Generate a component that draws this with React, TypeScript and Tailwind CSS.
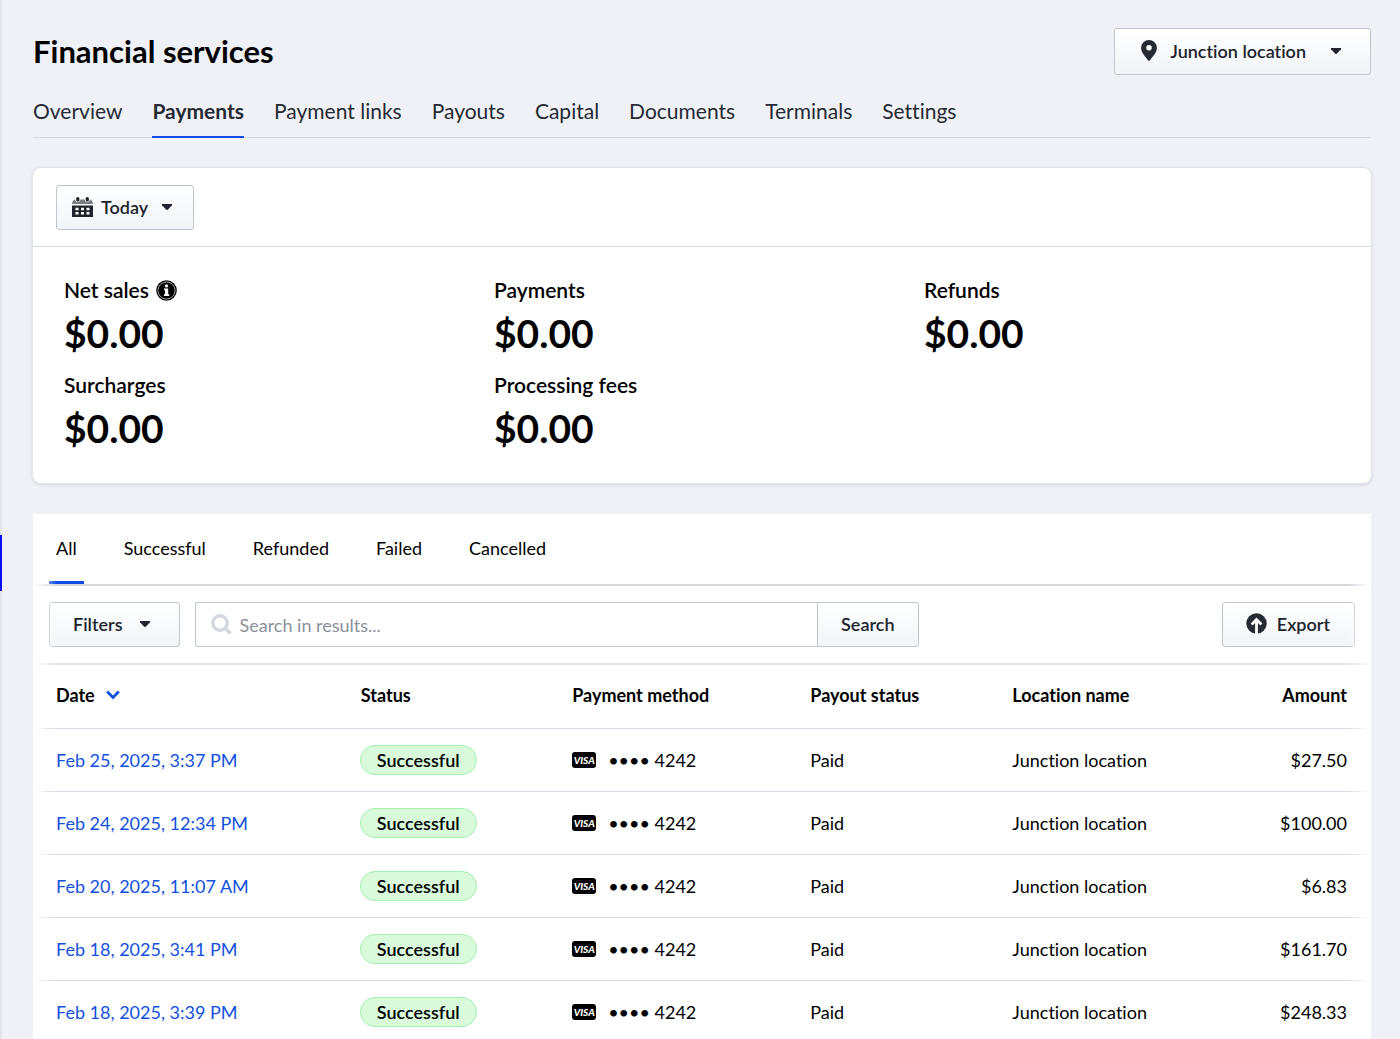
import React from 'react';

const tabs = ['Overview', 'Payments', 'Payment links', 'Payouts', 'Capital', 'Documents', 'Terminals', 'Settings'];

const stats = [
  { label: 'Net sales', value: '$0.00', info: true },
  { label: 'Payments', value: '$0.00' },
  { label: 'Refunds', value: '$0.00' },
  { label: 'Surcharges', value: '$0.00' },
  { label: 'Processing fees', value: '$0.00' },
];

const filters = ['All', 'Successful', 'Refunded', 'Failed', 'Cancelled'];

const payments = [
  { date: 'Feb 25, 2025, 3:37 PM', amount: '$27.50' },
  { date: 'Feb 24, 2025, 12:34 PM', amount: '$100.00' },
  { date: 'Feb 20, 2025, 11:07 AM', amount: '$6.83' },
  { date: 'Feb 18, 2025, 3:41 PM', amount: '$161.70' },
  { date: 'Feb 18, 2025, 3:39 PM', amount: '$248.33' },
];

const buttonStyle =
  'flex items-center border border-[#c0c6ce] bg-linear-to-b from-white to-[#f1f4f8] pb-[2px] text-lg font-semibold text-[#20242c]';

const Caret = () => (
  <svg width="12" height="8" viewBox="0 0 12 8" fill="#20242c" aria-hidden="true">
    <path d="M1.6 1h8.8c.7 0 1 .7.6 1.200L6.700 6.700c-.4.4-1 .4-1.400 0L1 2.200C.6 1.700.9 1 1.600 1z" />
  </svg>
);

const PinIcon = () => (
  <svg width="16" height="21" viewBox="0 0 16 21" fill="#262a33" aria-hidden="true">
    <path
      fillRule="evenodd"
      d="M8 0a7.900 7.900 0 0 0-7.900 7.900c0 4.700 4.300 8.300 7.100 12.600.4.600 1.200.6 1.600 0 2.800-4.300 7.100-7.900 7.100-12.600A7.900 7.900 0 0 0 8 0zm0 4.900a2.800 2.800 0 1 1 0 5.600 2.800 2.800 0 0 1 0-5.600z"
    />
  </svg>
);

const CalendarIcon = () => (
  <svg width="21" height="20" viewBox="0 0 21 20" aria-hidden="true">
    <path d="M0 7C.2 4.500 1.200 2.800 3 2.500c.4 1.800 1.300 2.700 2.700 2.700s2.400-.9 2.700-2.700h4.200c.3 1.800 1.300 2.700 2.700 2.700s2.300-.9 2.700-2.700c1.800.3 2.800 2 3 4.500z" fill="#777b82" />
    <path d="M0 8.500h21V20H0z" fill="#20242c" />
    <rect x="4.200" y="0" width="3.200" height="4.500" rx="1.500" fill="#20242c" />
    <rect x="13.700" y="0" width="3.200" height="4.500" rx="1.500" fill="#20242c" />
    <path d="M3.500 10.800h3v2.500h-3zM9 10.800h3v2.500H9zM14.500 10.800h3v2.500h-3zM3.500 15h3v2.500h-3zM9 15h3v2.500H9zM14.500 15h3v2.500h-3z" fill="#fff" />
  </svg>
);

const InfoIcon = () => (
  <svg width="21" height="21" viewBox="0 0 21 21" aria-hidden="true">
    <circle cx="10.500" cy="10.500" r="10.300" fill="#000" />
    <circle cx="10.500" cy="10.500" r="8.600" fill="none" stroke="#aaa" strokeWidth="1" />
    <circle cx="10.500" cy="5.900" r="1.600" fill="#fff" />
    <path d="M8 8.400h4.200v5.800h1v1.800H7.900v-1.800H9v-4H8z" fill="#fff" />
  </svg>
);

const SearchIcon = () => (
  <svg width="21" height="21" viewBox="0 0 21 21" fill="none" stroke="#d2d8de" aria-hidden="true">
    <circle cx="9" cy="9" r="7.200" strokeWidth="3.400" />
    <path d="M14.500 14.500l5 5" strokeWidth="3.600" />
  </svg>
);

const ExportIcon = () => (
  <svg width="21" height="21" viewBox="0 0 21 21" aria-hidden="true">
    <circle cx="10.500" cy="10.500" r="10.200" fill="#262a33" />
    <path d="M10.500 21V7M5.600 11.500l4.900-4.900 4.900 4.900" fill="none" stroke="#fff" strokeWidth="2.800" />
  </svg>
);

const SortIcon = () => (
  <svg width="14" height="10" viewBox="0 0 14 10" fill="none" stroke="#1350e0" strokeWidth="2.800" aria-hidden="true">
    <path d="M1.200 1.500L7 7.500l5.800-6" />
  </svg>
);

const Header = () => (
  <header>
    <div className="flex items-center justify-between">
      <h1 className="pb-[2px] text-[31px] leading-10 font-bold">Financial services</h1>
      <button type="button" className={`${buttonStyle} h-[47px] rounded-[3px] pr-7 pl-[26px]`}>
        <PinIcon />
        <span className="mr-6 ml-[13px]">Junction location</span>
        <Caret />
      </button>
    </div>
    <nav className="mt-[10px] flex gap-[30px] border-b border-[#d5d9e0] text-[21px] leading-[51px] text-[#262a33]">
      {tabs.map((tab) => (
        <a
          key={tab}
          href="#"
          className={
            tab === 'Payments'
              ? '-mb-px border-b-2 border-[#0f4be6] font-bold'
              : '-mb-px border-b-2 border-transparent'
          }
        >
          {tab}
        </a>
      ))}
    </nav>
  </header>
);

const Summary = () => (
  <section className="mt-[30px] rounded-lg bg-white shadow-[0_0_0_1px_#e0e3e9,0_1px_4px_rgba(30,40,60,0.2)]">
    <div className="border-b border-[#d5dbe1] px-[23px] pt-[17px] pb-4">
      <button type="button" className={`${buttonStyle} h-[45px] gap-2 rounded-[3px] pr-5 pl-[15px]`}>
        <CalendarIcon />
        <span className="mr-[5px]">Today</span>
        <Caret />
      </button>
    </div>
    <dl className="grid grid-cols-3 gap-y-2 px-6 py-[27px]">
      {stats.map((stat) => (
        <div key={stat.label} className="px-[7px]">
          <dt className="flex items-center gap-[7px] text-[21px] leading-8 font-semibold">
            {stat.label}
            {stat.info && <InfoIcon />}
          </dt>
          <dd className="text-[39px] leading-[55px] font-bold">{stat.value}</dd>
        </div>
      ))}
    </dl>
  </section>
);

const Toolbar = () => (
  <div className="flex items-center border-b-2 border-[#e1e5ea] px-4 py-4">
    <button type="button" className={`${buttonStyle} h-[45px] gap-4 rounded-[3px] pr-7 pl-[23px]`}>
      Filters
      <Caret />
    </button>
    <form className="ml-[15px] flex h-[45px] w-[56%] max-w-[724px]">
      <label className="flex flex-1 items-center gap-2 rounded-l-[3px] border border-r-0 border-[#c0c6ce] pl-[15px]">
        <SearchIcon />
        <input
          type="text"
          aria-label="Search in results"
          placeholder="Search in results..."
          className="w-full flex-1 text-lg outline-none placeholder:text-[#8b909b]"
        />
      </label>
      <button type="submit" className={`${buttonStyle} rounded-r-[3px] px-[23px]`}>
        Search
      </button>
    </form>
    <button type="button" className={`${buttonStyle} ml-auto h-[45px] gap-[10px] rounded-[3px] pr-6 pl-[23px]`}>
      <ExportIcon />
      Export
    </button>
  </div>
);

const PaymentsTable = () => (
  <table className="w-full table-fixed text-left text-lg">
    <colgroup>
      <col className="w-[23.9%]" />
      <col className="w-[15.8%]" />
      <col className="w-[17.8%]" />
      <col className="w-[15.1%]" />
      <col className="w-[14%]" />
      <col />
    </colgroup>
    <thead>
      <tr className="h-[63px] border-b border-[#d5dbe0] font-bold">
        <th className="pb-[2px] pl-[23px]">
          <button type="button" className="flex items-center gap-[11px]">
            Date
            <SortIcon />
          </button>
        </th>
        <th className="pb-[2px] pl-2">Status</th>
        <th className="pb-[2px] pl-2">Payment method</th>
        <th className="pb-[2px] pl-2">Payout status</th>
        <th className="pb-[2px] pl-2">Location name</th>
        <th className="pr-6 pb-[2px] text-right">Amount</th>
      </tr>
    </thead>
    <tbody>
      {payments.map((payment) => (
        <tr key={payment.date} className="h-[63px] border-b border-[#d5dbe0]">
          <td className="pl-[23px]">
            <a href="#" className="text-[#1350e0]">
              {payment.date}
            </a>
          </td>
          <td className="pl-[7px]">
            <span className="inline-block rounded-full border border-[#a3f2ae] bg-[#d9fbdc] px-4 leading-7 font-semibold">
              Successful
            </span>
          </td>
          <td className="pl-2">
            <div className="flex items-center">
              <span className="mr-3 flex h-4 w-6 items-center justify-center rounded-[3px] bg-black text-[10px] leading-none font-black text-white italic">
                VISA
              </span>
              •••• 4242
            </div>
          </td>
          <td className="pl-2">Paid</td>
          <td className="pl-2">Junction location</td>
          <td className="pr-6 text-right">{payment.amount}</td>
        </tr>
      ))}
    </tbody>
  </table>
);

const App = () => {
  return (
    <div className="flex h-screen overflow-hidden bg-[#f0f1f7] font-['Lato',sans-serif] text-black [font-variant-ligatures:none]">
      <aside className="flex w-[2px] shrink-0 items-start bg-[#e2e3ea] pt-[535px]">
        <div className="h-14 w-full bg-[#0a0af5]" />
      </aside>
      <main className="min-w-0 flex-1 pt-7 pr-[29px] pl-[31px]">
        <Header />
        <Summary />
        <section className="relative mt-[31px] bg-white">
          <div className="flex gap-[47px] border-b-2 border-[#d5d9de] px-[23px] text-lg">
            {filters.map((filter) => (
              <button key={filter} type="button" className="relative h-[70px] pb-[2px]">
                {filter}
                {filter === 'All' && <span className="absolute -inset-x-[7px] bottom-0 h-[3px] bg-[#0f4be6]" />}
              </button>
            ))}
          </div>
          <Toolbar />
          <PaymentsTable />
          <div className="pointer-events-none absolute inset-y-0 left-0 w-6 bg-linear-to-r from-white to-transparent" />
          <div className="pointer-events-none absolute inset-y-0 right-0 w-6 bg-linear-to-l from-white to-transparent" />
        </section>
      </main>
    </div>
  );
};

export default App;
